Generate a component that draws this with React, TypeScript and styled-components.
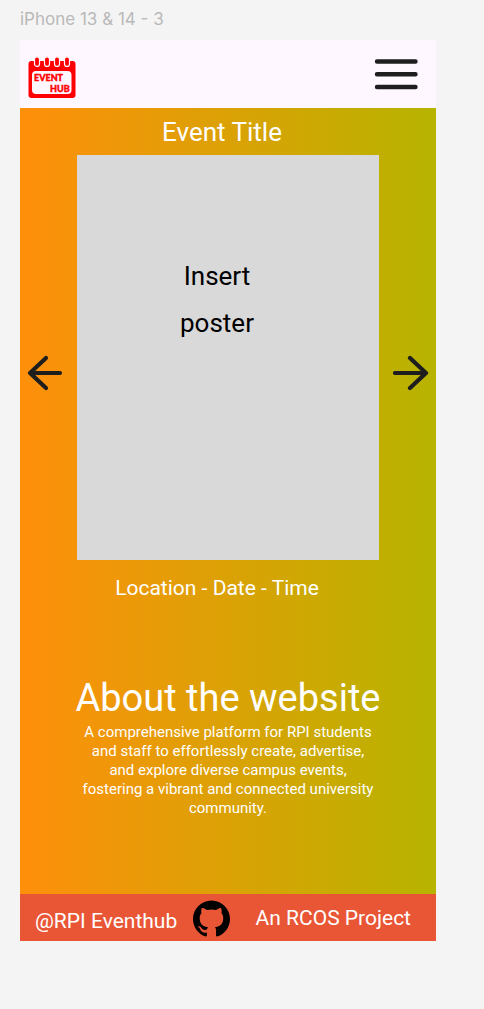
import React from "react";
import styled, { createGlobalStyle } from "styled-components";
import { SiGithub } from "react-icons/si";

const GlobalStyle = createGlobalStyle`
  *, *::before, *::after { box-sizing: border-box; }
  body {
    margin: 0;
    background: #f4f4f4;
    font-family: Roboto, "Liberation Sans", sans-serif;
    color: #ffffff;
  }
  h1, h2, p { margin: 0; font-weight: 400; }
`;

const Canvas = styled.div`
  padding: 8px 48px 68px 20px;
`;

const FrameLabel = styled.div`
  height: 32px;
  font: 400 17px/22px Inter, "Liberation Sans", sans-serif;
  color: #b9b9b9;
  white-space: nowrap;
`;

const Screen = styled.div`
  display: flex;
  flex-direction: column;
  background: linear-gradient(90deg, #ff8f0b 0%, #b7b400 100%);
`;

const Header = styled.header`
  display: flex;
  align-items: flex-end;
  justify-content: space-between;
  height: 68px;
  padding: 0 16px 10px 8px;
  background: #fef7ff;
`;

const LogoLink = styled.a`
  display: block;
  line-height: 0;
`;

const IconButton = styled.button`
  display: flex;
  align-items: center;
  justify-content: center;
  padding: 0;
  border: 0;
  background: none;
  color: #1e1e1e;
  cursor: pointer;
`;

const MenuButton = styled(IconButton)`
  padding-bottom: 8px;
`;

const ArrowButton = styled(IconButton)`
  padding-top: 30px;
`;

const EventTitle = styled.h2`
  padding: 8px 12px 7px 0;
  font-size: 26px;
  line-height: 32px;
  text-align: center;
`;

const Carousel = styled.section`
  display: grid;
  grid-template-columns: 50px 1fr 50px;
  column-gap: 7px;
  align-items: center;
`;

const Poster = styled.div`
  min-height: 405px;
  padding: 98px 100px 0 78px;
  background: #d9d9d9;
  color: #000000;
  font-size: 26px;
  line-height: 47px;
  text-align: center;
`;

const EventMeta = styled.p`
  padding: 16px 22px 0 0;
  font-size: 21px;
  line-height: 24px;
  text-align: center;
`;

const About = styled.section`
  padding: 73px 48px 76px;
  text-align: center;
`;

const AboutTitle = styled.h1`
  font-size: 38px;
  line-height: 50px;
  white-space: nowrap;
`;

const AboutText = styled.p`
  padding: 0 12px;
  font-size: 15px;
  line-height: 19px;
`;

const Footer = styled.footer`
  display: flex;
  align-items: center;
  gap: 16px;
  padding: 6px 25px 4px 15px;
  background: #e95636;
  font-size: 21px;
  white-space: nowrap;
`;

const Handle = styled.span`
  padding-top: 6px;
  line-height: 31px;
`;

const Credit = styled.span`
  margin-left: auto;
  line-height: 37px;
`;

const GithubLink = styled.a`
  display: flex;
  color: #000000;
`;

function Logo() {
  return (
    <svg width="48" height="42" viewBox="0 0 48 42" role="img" aria-label="Event Hub">
      <rect x="0.5" y="5" width="47" height="37" rx="3" fill="#ff0000" />
      <rect x="4" y="15" width="39.5" height="23" rx="4" fill="#fef7ff" />
      {[9, 19, 29, 39].map((x) => (
        <rect key={x} x={x - 2.5} y="0.8" width="5" height="9.6" rx="2.5" fill="#ff0000" stroke="#fef7ff" strokeWidth="1.2" />
      ))}
      <g fill="#ff0000" stroke="#ff0000" strokeWidth="0.4" fontFamily="Lato, sans-serif" fontWeight="900" fontSize="9">
        <text x="6" y="24.5">EVENT</text>
        <text x="22" y="35.5">HUB</text>
      </g>
    </svg>
  );
}

function Arrow({ direction }: { direction: "left" | "right" }) {
  return (
    <svg width="36" height="36" viewBox="0 0 36 36" fill="none" stroke="currentColor" strokeWidth="4.2" strokeLinecap="round" strokeLinejoin="round" aria-hidden="true">
      <path d={direction === "left" ? "M33 18H3M19 3L3 18L19 33" : "M2 18H32M17 3L33 18L17 33"} />
    </svg>
  );
}

export default function App() {
  return (
    <>
      <GlobalStyle />
      <Canvas>
        <FrameLabel>iPhone 13 &amp; 14 - 3</FrameLabel>
        <Screen>
          <Header>
            <LogoLink href="#home"><Logo /></LogoLink>
            <MenuButton type="button" aria-label="Menu">
              <svg width="46" height="32" viewBox="0 0 46 32" stroke="currentColor" strokeWidth="4.4" strokeLinecap="round" aria-hidden="true">
                <path d="M3 3.5H41.5M3 16.2H41.5M3 29H41.5" />
              </svg>
            </MenuButton>
          </Header>
          <main>
            <EventTitle>Event Title</EventTitle>
            <Carousel aria-label="Events">
              <ArrowButton type="button" aria-label="Previous event"><Arrow direction="left" /></ArrowButton>
              <Poster>Insert poster</Poster>
              <ArrowButton type="button" aria-label="Next event"><Arrow direction="right" /></ArrowButton>
            </Carousel>
            <EventMeta>Location - Date - Time</EventMeta>
            <About>
              <AboutTitle>About the website</AboutTitle>
              <AboutText>
                A comprehensive platform for RPI students and staff to effortlessly create, advertise, and explore
                diverse campus events, fostering a vibrant and connected university community.
              </AboutText>
            </About>
          </main>
          <Footer>
            <Handle>@RPI Eventhub</Handle>
            <GithubLink href="#github" aria-label="GitHub"><SiGithub size={37} /></GithubLink>
            <Credit>An RCOS Project</Credit>
          </Footer>
        </Screen>
      </Canvas>
    </>
  );
}
